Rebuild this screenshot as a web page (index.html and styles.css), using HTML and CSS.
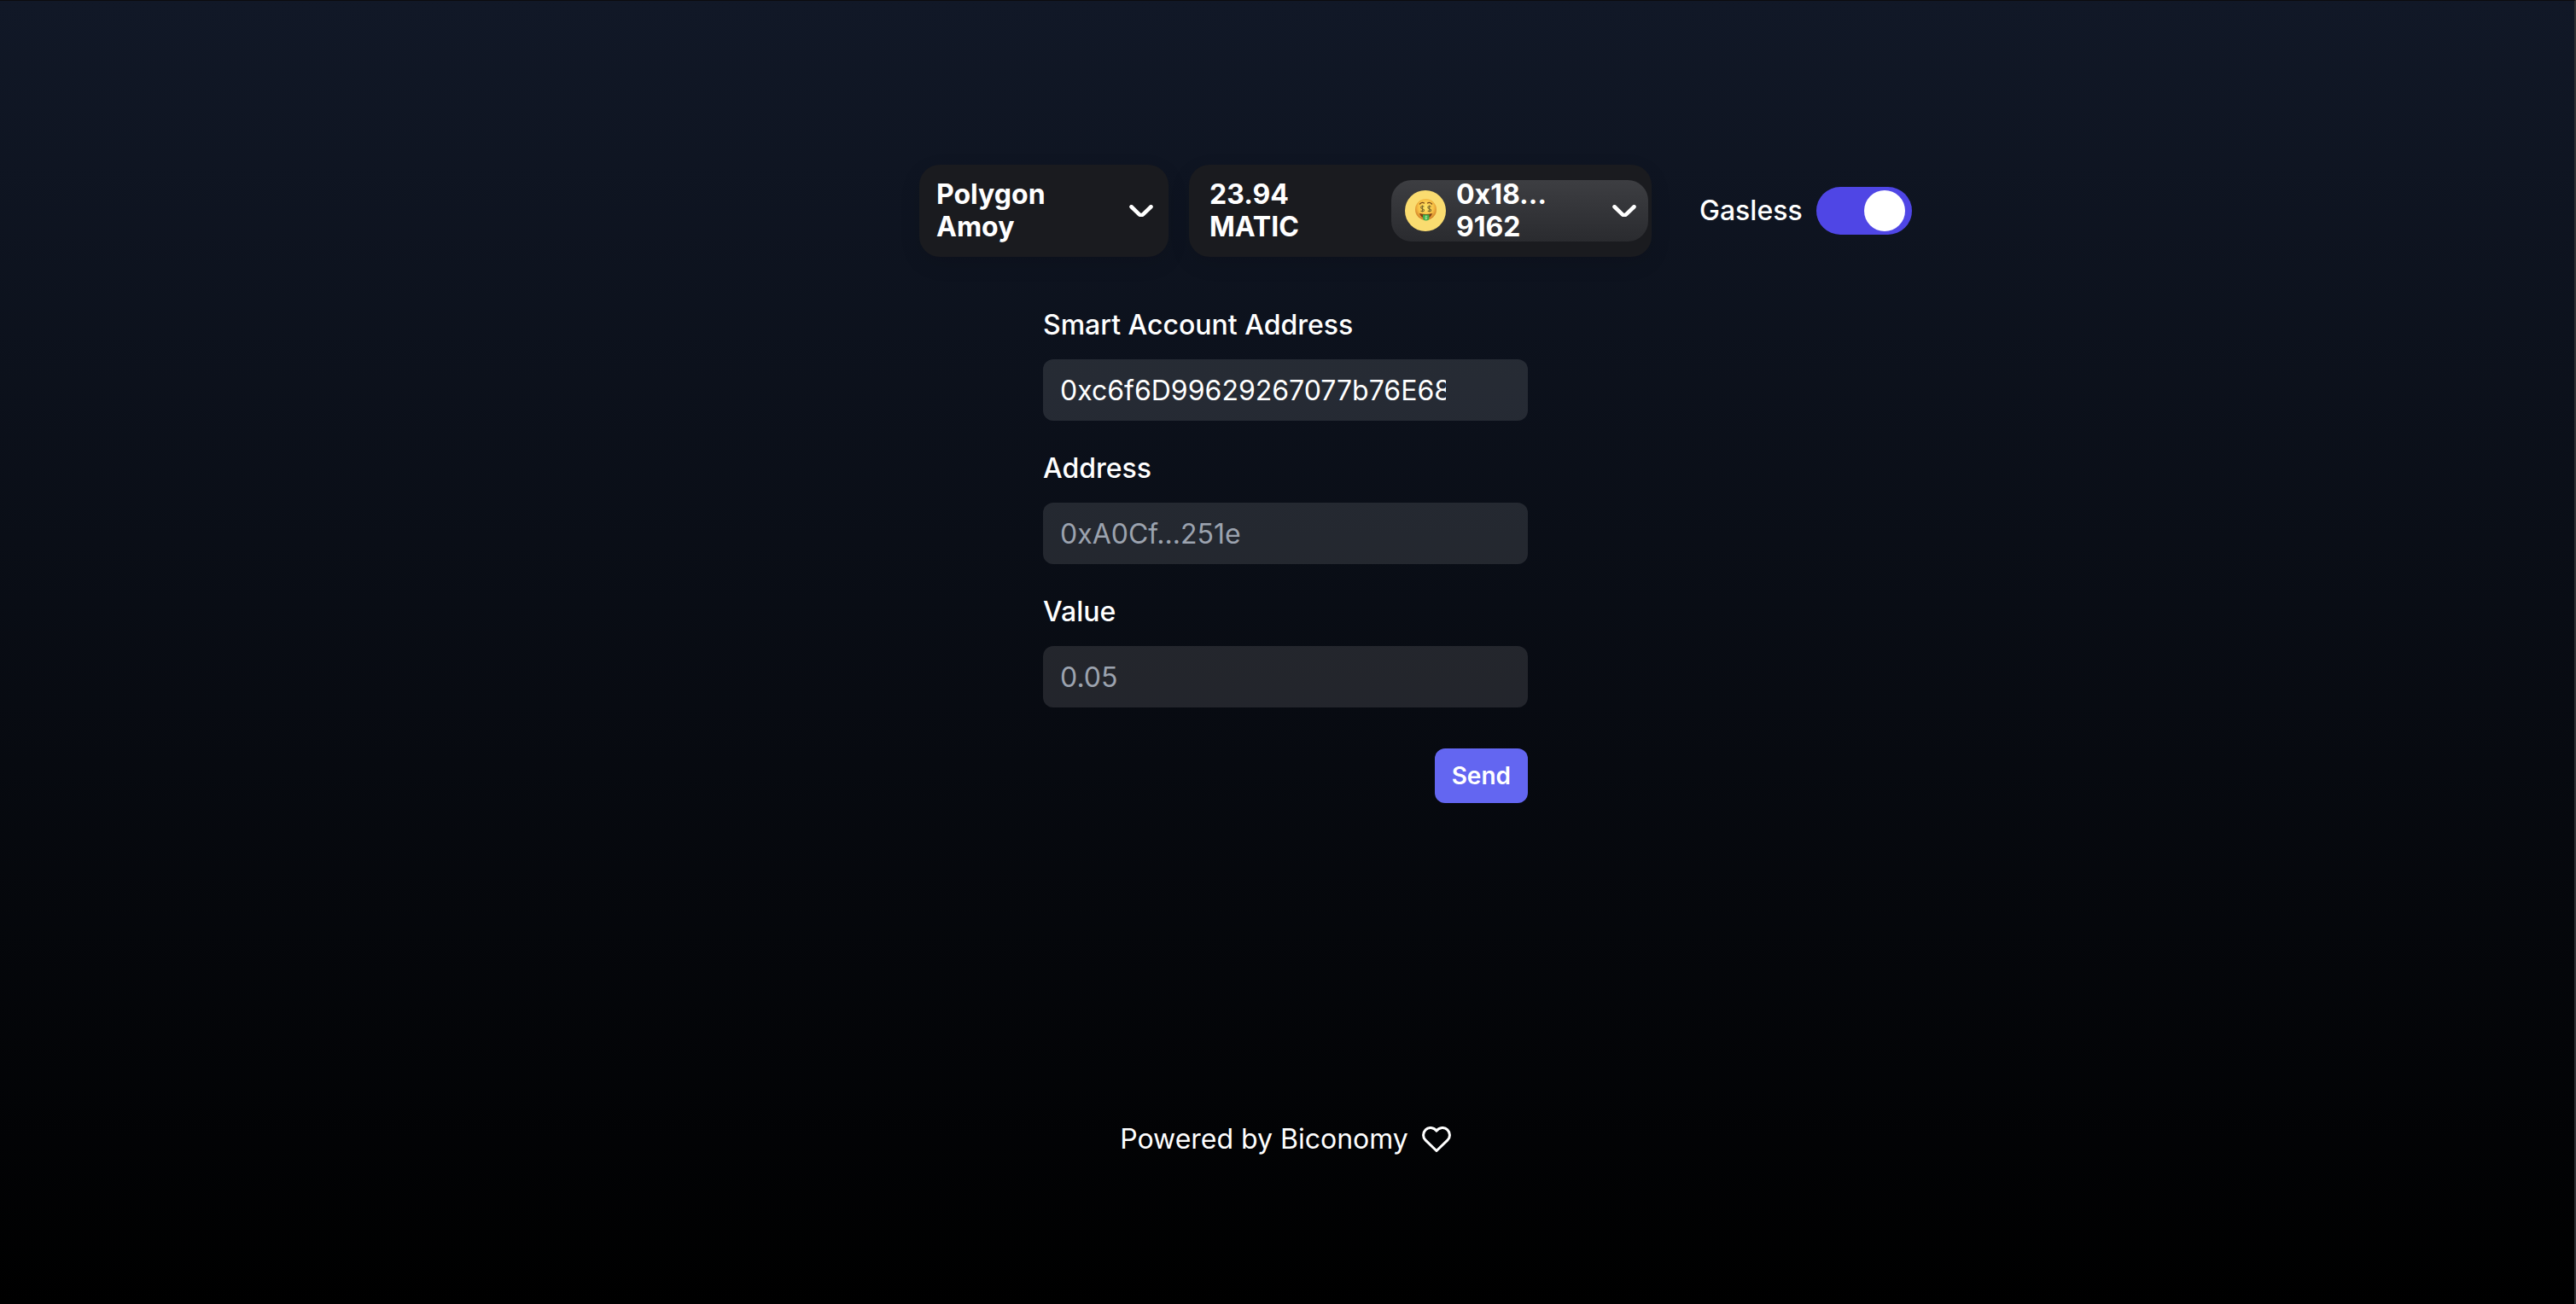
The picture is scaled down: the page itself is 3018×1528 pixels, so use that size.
FILE: index.html
```html
<!DOCTYPE html>
<html lang="en">
<head>
<meta charset="utf-8">
<title>Send with Biconomy</title>
<link rel="stylesheet" href="styles.css">
</head>
<body>
<div class="page">
  <header class="wallet-bar">
    <div class="wallet">
      <button class="wallet-button network" type="button">
        <span class="network-name">Polygon Amoy</span>
        <svg class="chevron" viewBox="0 0 14 7" aria-hidden="true"><path d="M12.75 1.54 8.002 6.055c-.577.549-1.484.549-2.061 0L1.25 1.54" transform="translate(0 -.4)" fill="none" stroke="currentColor" stroke-width="2.3" stroke-linecap="round" stroke-linejoin="round"/></svg>
      </button>
      <button class="wallet-button account" type="button">
        <span class="balance">23.94 MATIC</span>
        <span class="account-pill">
          <svg class="avatar" viewBox="0 0 48 48" aria-hidden="true">
            <defs>
              <radialGradient id="face" cx=".5" cy=".4" r=".6"><stop offset="0" stop-color="#ffe668"/><stop offset=".6" stop-color="#f8c145"/><stop offset="1" stop-color="#cf7a25"/></radialGradient>
            </defs>
            <circle cx="24" cy="24" r="24" fill="#fadc70"/>
            <circle cx="24.5" cy="22.5" r="12.5" fill="url(#face)"/>
            <path d="M17.500 16q2.500-2.500 5-1M26.500 15q2.500-1.500 5 1" fill="none" stroke="#7a4a18" stroke-width="1.300" stroke-linecap="round"/>
            <path d="M22.300 19.300c-1-1.200-3.700-1-3.700.8 0 2 3.900 1.200 3.900 3.200 0 1.800-2.900 1.900-4 .6M20.500 17.600v8M30.500 19.300c-1-1.200-3.700-1-3.700.8 0 2 3.900 1.200 3.900 3.200 0 1.800-2.900 1.900-4 .6M28.700 17.600v8" fill="none" stroke="#7d6a2c" stroke-width="1.100"/>
            <path d="M17 27q7.500 2 15 0q-1.500 5.500-7.500 5.500t-7.500-5.500z" fill="#7b3b14"/>
            <path d="M21 28.500h7.500v3.500q0 3.500-3.750 3.500t-3.750-3.500z" fill="#3fae49"/>
            <path d="M26.300 30.500q-2.800-.6-2.800.8t2.500 1q.5 1.600-2.600 1.200M24.800 29.500v5" fill="none" stroke="#a8e09a" stroke-width=".8"/>
          </svg>
          <span class="account-name">0x18…9162</span>
          <svg class="chevron" viewBox="0 0 14 7" aria-hidden="true"><path d="M12.75 1.54 8.002 6.055c-.577.549-1.484.549-2.061 0L1.25 1.54" transform="translate(0 -.4)" fill="none" stroke="currentColor" stroke-width="2.3" stroke-linecap="round" stroke-linejoin="round"/></svg>
        </span>
      </button>
    </div>
    <label class="gasless">Gasless <input class="switch" type="checkbox" role="switch" checked></label>
  </header>
  <form class="send-form">
    <div class="field">
      <label for="account">Smart Account Address</label>
      <div class="box"><input id="account" type="text" value="0xc6f6D99629267077b76E68" readonly></div>
    </div>
    <div class="field">
      <label for="address">Address</label>
      <div class="box"><input id="address" type="text" placeholder="0xA0Cf...251e"></div>
    </div>
    <div class="field">
      <label for="value">Value</label>
      <div class="box"><input id="value" type="text" placeholder="0.05"></div>
    </div>
    <button class="send" type="button">Send</button>
  </form>
  <footer class="footer">
    <span>Powered by Biconomy</span>
    <svg class="heart" viewBox="0 0 34 30" aria-hidden="true"><path d="M17 5.200C13.700.6 7.600.4 4.200 3.900.6 7.500.7 12.800 4.200 16.200L17 28.500l12.800-12.300c3.500-3.400 3.600-8.700 0-12.300C26.400.4 20.300.6 17 5.200z" fill="none" stroke="currentColor" stroke-width="3" stroke-linejoin="round"/></svg>
  </footer>
</div>
</body>
</html>
```
FILE: styles.css
```css
* {
  box-sizing: border-box;
}

body {
  margin: 0;
  background: #000;
  color: #fff;
  font: 400 32px/48px Inter, sans-serif;
}

button,
input {
  font: inherit;
  color: inherit;
  border: 0;
  margin: 0;
}

button {
  cursor: pointer;
}

.page {
  display: flex;
  flex-direction: column;
  align-items: center;
  min-height: 100vh;
  padding: 192px 4px 169px 0;
  border-top: 1px solid #0c0c0e;
  border-right: 2px solid #303134;
  background: linear-gradient(#111827, #000);
}

.wallet-bar {
  display: grid;
  grid-template-columns: 1fr auto 1fr;
  align-items: center;
  column-gap: 56px;
  width: 100%;
}

.wallet {
  grid-column: 2;
  display: flex;
  gap: 24px;
}

.wallet-button {
  display: flex;
  align-items: center;
  justify-content: space-between;
  border-radius: 24px;
  background: #1a1b1f;
  box-shadow: 0 8px 24px rgba(0, 0, 0, 0.1);
  font-weight: 700;
  line-height: 38px;
  text-align: left;
}

.network {
  width: 292px;
  padding: 16px 18px 16px 20px;
}

.network-name {
  width: 140px;
}

.account {
  width: 542px;
  padding: 16px 4px 16px 24px;
}

.balance {
  width: 120px;
}

.account-pill {
  display: flex;
  align-items: center;
  gap: 12px;
  width: 301px;
  height: 72px;
  padding: 0 14px 0 16px;
  border-radius: 24px;
  background: linear-gradient(#3d3e42, #2a2b2f);
}

.avatar {
  width: 48px;
  height: 48px;
}

.account-name {
  width: 110px;
  overflow-wrap: anywhere;
}

.account-pill .chevron {
  margin-left: auto;
}

.chevron {
  width: 28px;
  height: 14px;
}

.gasless {
  display: flex;
  align-items: center;
  gap: 16px;
  font-weight: 500;
}

.switch {
  appearance: none;
  display: flex;
  align-items: center;
  justify-content: flex-end;
  width: 112px;
  height: 56px;
  padding: 0 8px;
  border-radius: 28px;
  background: #4f46e5;
}

.switch::before {
  content: "";
  width: 48px;
  height: 48px;
  border-radius: 50%;
  background: #fff;
}

.send-form {
  display: flex;
  flex-direction: column;
  gap: 32px;
  width: 568px;
  margin-top: 56px;
}

.field {
  display: flex;
  flex-direction: column;
  gap: 16px;
}

.field label {
  font-weight: 500;
}

.box {
  height: 72px;
  padding-left: 20px;
  border-radius: 12px;
  background: rgba(255, 255, 255, 0.11);
}

.box input {
  width: 452px;
  height: 72px;
  padding: 0;
  background: transparent;
  outline: 0;
}

.box input::placeholder {
  color: #9ca3af;
  opacity: 1;
}

.send {
  align-self: flex-end;
  height: 64px;
  margin-top: 16px;
  padding: 0 20px;
  border-radius: 12px;
  background: #6366f1;
  font-size: 28px;
  font-weight: 600;
  line-height: 40px;
}

.footer {
  display: flex;
  align-items: center;
  gap: 16px;
  margin-top: auto;
}

.heart {
  width: 34px;
  height: 30px;
}
```
